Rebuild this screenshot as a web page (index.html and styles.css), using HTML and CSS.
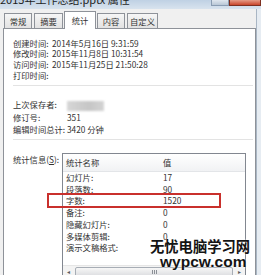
FILE: index.html
```html
<!DOCTYPE html>
<html lang="zh-CN">
<head>
    <meta charset="UTF-8">
    <title>2015年工作总结.pptx 属性</title>
    <link rel="stylesheet" href="styles.css">
</head>
<body>
    <div class="titlebar">
        <span class="title">2015年工作总结.pptx 属性</span>
        <div class="caption">
            <span class="btn-max"></span>
            <span class="btn-close"></span>
        </div>
    </div>

    <div class="client">
        <div class="main">
            <!-- 选项卡 -->
            <div class="tabs">
                <div class="tab w28">常规</div>
                <div class="tab w29">摘要</div>
                <div class="tab active">统计</div>
                <div class="tab w28">内容</div>
                <div class="tab w31">自定义</div>
            </div>

            <div class="panel">
                <div class="props dates">
                    <span>创建时间:</span><span>2014年5月16日 9:31:59</span>
                    <span>修改时间:</span><span>2015年11月8日 10:31:54</span>
                    <span>访问时间:</span><span>2015年11月25日 21:50:28</span>
                    <span>打印时间:</span><span></span>
                </div>
                <div class="sep"></div>

                <div class="props edits">
                    <span>上次保存者:</span><span><i class="blur"></i></span>
                    <span>修订号:</span><span>351</span>
                    <span>编辑时间总计:</span><span>3420 分钟</span>
                </div>
                <div class="sep second"></div>

                <div class="stats">
                    <span class="stats-label">统计信息(<u>S</u>):</span>
                    <div class="listbox">
                        <div class="list-head">
                            <span>统计名称</span><span>值</span>
                        </div>
                        <div class="list-body">
                            <span>幻灯片:</span><span>17</span>
                            <span>段落数:</span><span>90</span>
                            <span>字数:</span><span>1520</span>
                            <span>备注:</span><span>0</span>
                            <span>隐藏幻灯片:</span><span>0</span>
                            <span>多媒体剪辑:</span><span>0</span>
                            <span>演示文稿格式:</span><span></span>
                        </div>
                        <div class="hscroll">
                            <span class="arrow">&#9666;</span>
                            <span class="thumb"><i class="grip"></i></span>
                            <span class="arrow">&#9656;</span>
                        </div>
                    </div>
                </div>
            </div>
        </div>
        <div class="frame"></div>
    </div>

    <!-- 标注和水印 -->
    <div class="highlight"></div>
    <div class="watermark">
        <div class="wm-cn">无忧电脑学习网</div>
        <div class="wm-en">wypcw.com</div>
    </div>
</body>
</html>
```

FILE: styles.css
```css
/* 属性对话框 */
body {
    margin: 0;
    width: 261px;
    height: 275px;
    overflow: hidden;
    position: relative;
    background: #f0f0f0;
    font-family: "Noto Sans CJK SC", sans-serif;
    font-size: 8.3px;
    color: #333;
}

.titlebar {
    height: 9px;
    display: flex;
    justify-content: space-between;
    overflow: hidden;
    background: linear-gradient(#bfd1e4, #d8e3ee);
}

.title {
    font-size: 11px;
    line-height: 11px;
    margin-top: -6px;
    white-space: nowrap;
    color: #1e1e1e;
}

.caption {
    display: flex;
    align-items: flex-start;
}

.btn-max {
    width: 16px;
    height: 5px;
    background: linear-gradient(#dfe7ef, #b9c7d6);
    border: 1px solid #8a9db3;
    border-top: none;
}

.btn-close {
    width: 30px;
    height: 5px;
    background: linear-gradient(#e59c88, #c9462c);
    border: 1px solid #7d3021;
    border-top: none;
}

.client {
    display: flex;
    height: 266px;
}

.main {
    width: 256px;
    padding-left: 3px;
    box-sizing: border-box;
}

.frame {
    flex: 1;
    border-left: 1px solid #a9b6c4;
    background: #e6ecf2;
}

/* 选项卡 */
.tabs {
    display: flex;
    align-items: flex-end;
    gap: 2px;
    height: 19px;
    padding-left: 1px;
}

.tab {
    height: 15px;
    line-height: 14px;
    text-align: center;
    border: 1px solid #8e9299;
    border-bottom: none;
    box-sizing: border-box;
    background: linear-gradient(#f6f6f6, #e2e2e2);
}

.w28 { width: 28px; }
.w29 { width: 29px; }
.w31 { width: 31px; }

.tab.active {
    width: 32px;
    height: 18px;
    line-height: 16px;
    margin: 0 -1px -1px;
    background: #fff;
    position: relative;
    z-index: 1;
}

.panel {
    height: 260px;
    padding: 8.5px 0 0 9px;
    box-sizing: border-box;
    background: #fff;
    border: 1px solid #8e9299;
}

.props {
    display: grid;
    white-space: nowrap;
}

.dates {
    grid-template-columns: 39px auto;
    line-height: 10.7px;
}

.edits {
    grid-template-columns: 54px auto;
    line-height: 12px;
    margin-top: 12.5px;
}

.blur {
    display: inline-block;
    width: 37px;
    height: 10px;
    vertical-align: middle;
    background: linear-gradient(90deg, #d6d6d6, #c6c6c6 60%, #d4d4d4);
    filter: blur(1px);
}

.sep {
    height: 1px;
    margin: 4.5px 2px 0 0;
    background: #e3e3e3;
}

.sep.second {
    margin-top: 4px;
}

/* 统计信息 */
.stats {
    display: flex;
    margin-top: 13px;
}

.stats-label {
    width: 49px;
    line-height: 12px;
    white-space: nowrap;
}

.listbox {
    width: 184px;
    height: 130px;
    border: 1px solid #828790;
    box-sizing: border-box;
}

.list-head,
.list-body {
    display: grid;
    grid-template-columns: 97px auto;
    padding-left: 3px;
    white-space: nowrap;
}

.list-head {
    height: 17px;
    line-height: 17px;
    border-bottom: 1px solid #e3e5e8;
    background: linear-gradient(#fff, #f1f2f4);
}

.list-body {
    line-height: 11.7px;
    padding-bottom: 11px;
}

.hscroll {
    display: flex;
    height: 12px;
    background: #f3f3f3;
    border-top: 1px solid #e6e6e6;
}

.arrow {
    width: 11px;
    font-size: 6px;
    line-height: 11px;
    text-align: center;
    color: #5c5c5c;
}

.thumb {
    flex: 1;
    margin: 1px 1px;
    display: flex;
    justify-content: center;
    align-items: center;
    border: 1px solid #a7adb5;
    border-radius: 2px;
    background: linear-gradient(#f7f7f7, #dcdde0);
}

.grip {
    width: 5px;
    height: 4px;
    background: repeating-linear-gradient(90deg, #8b8f96 0 1px, transparent 1px 2px);
}

/* 红框和水印 */
.highlight {
    position: absolute;
    left: 47px;
    top: 193px;
    width: 174px;
    height: 15px;
    border: 2px solid #c9302c;
    box-sizing: border-box;
}

.watermark {
    position: absolute;
    left: 150px;
    top: 238px;
    color: #141414;
    font-weight: bold;
    text-shadow: 0 0 2px #fff;
}

.wm-cn {
    font-size: 14.3px;
    line-height: 16px;
    white-space: nowrap;
}

.wm-en {
    margin-left: 10px;
    font-family: "Liberation Sans", Arial, sans-serif;
    font-size: 15.5px;
    line-height: 15px;
}
```
